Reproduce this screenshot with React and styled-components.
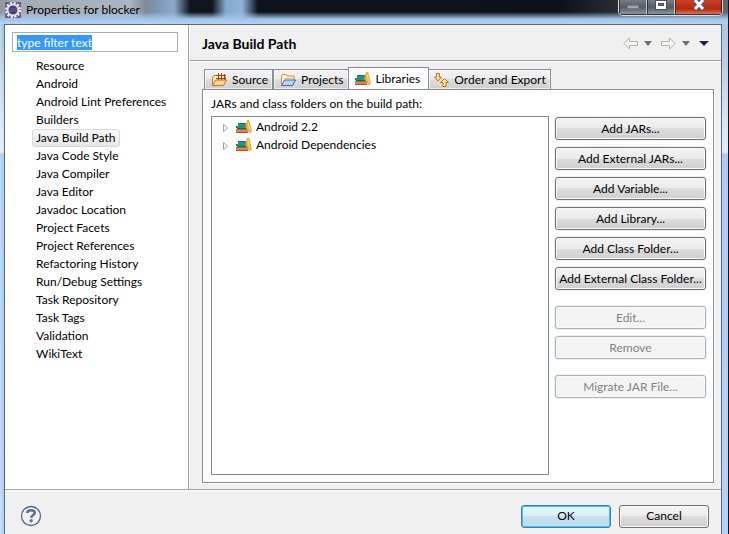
import React, { useEffect, useRef, useState } from 'react';
import styled, { createGlobalStyle, css } from 'styled-components';

const GlobalStyle = createGlobalStyle`
  *, *::before, *::after { box-sizing: border-box; }
  html, body { margin: 0; height: 100%; }
  #root { min-height: 100%; }
  body, button, input {
    font-family: Lato, "Open Sans", sans-serif;
    font-size: 12px;
    line-height: 16px;
    color: #000;
  }
`;

const Window = styled.div`
  display: flex;
  flex-direction: column;
  min-height: 100vh;
  padding: 0 2px 0 4px;
  overflow: hidden;
  border-right: 1px solid #10151c;
  background:
    linear-gradient(to right, rgba(255, 255, 255, 0.35), transparent 2px),
    linear-gradient(#9fc2e6 0, #b9cfe6 60px, #d5e4f4 120px, #dfecfa 152px, #a9cdf5 154px, #b2d4f8 100%);
`;

const TitleBar = styled.header`
  display: flex;
  flex: none;
  align-items: flex-start;
  height: 24px;
  margin: 0 -2px 0 -4px;
  padding-left: 5px;
  background:
    linear-gradient(rgba(160, 195, 232, 0) 12px, #a2c4eb 19px, #b5d2f2 24px),
    linear-gradient(to right, #8e969d 0, #a4adb5 20px, #a9b5c0 130px, #7e8a96 146px, #7d98b3 158px, #8aabcc 174px,
      #10161e 190px, #0e151d 212px, #83a9cc 226px, #8fb4da 242px, #0c131b 258px, #0b1219 560px, #262a30 610px, #5e666f 100%);
`;

const TitleText = styled.h1`
  flex: 1;
  margin: 0 0 0 5px;
  padding-top: 2px;
  font-size: 12px;
  font-weight: 400;
`;

const WindowButtons = styled.div`
  display: flex;
  height: 16px;
  margin-right: 5px;
  border: 1px solid #d9dee3;
  border-top: 0;
  border-radius: 0 0 5px 5px;
  overflow: hidden;
`;

const WindowButton = styled.button`
  display: flex;
  align-items: flex-start;
  justify-content: center;
  width: ${(p) => (p.$close ? 47 : 28)}px;
  padding: 0;
  border: 1px solid #2e343a;
  border-top: 0;
  border-right-color: ${(p) => (p.$close ? '#4a1510' : '#c4c8cc')};
  background: ${(p) => (p.$close
    ? 'linear-gradient(#c9412a, #b22a12 9px, #dc7452)'
    : 'linear-gradient(#777d83, #565c63 7px, #8b929a)')};
`;

const Client = styled.div`
  display: flex;
  flex: 1;
  flex-direction: column;
  margin-right: 4px;
  border: 1px solid #5b6878;
  border-bottom: 0;
  background: #f0f0f0;
`;

const Body = styled.div`
  display: flex;
  flex: 1;
  border-bottom: 1px solid #a0a0a0;
`;

const Sidebar = styled.nav`
  display: flex;
  flex: none;
  flex-direction: column;
  width: 184px;
  padding: 7px 10px 8px 7px;
  border-right: 1px solid #a0a0a0;
  background: #fff;
`;

const FilterInput = styled.input`
  width: 100%;
  height: 20px;
  padding: 0 4px;
  border: 1px solid #abadb3;
  border-radius: 0;
  outline: none;
  background: #fff;
  &::selection { background: #3399ff; color: #fff; }
`;

const PageList = styled.ul`
  display: flex;
  flex-direction: column;
  align-items: flex-start;
  margin: 5px 0 0 20px;
  padding: 0;
  list-style: none;
`;

const PageLink = styled.a`
  display: block;
  height: 18px;
  padding: 0 3px;
  border: 1px solid transparent;
  border-radius: 3px;
  color: #000;
  text-decoration: none;
  white-space: nowrap;
  ${(p) => p.$selected && css`
    border-color: #d9d9d9;
    background: linear-gradient(#f9f9f9, #e6e6e6);
  `}
`;

const Main = styled.main`
  display: flex;
  flex: 1;
  flex-direction: column;
  min-width: 0;
  border-left: 1px solid #fff;
`;

const PageHeader = styled.div`
  display: flex;
  flex: none;
  align-items: center;
  justify-content: space-between;
  height: 36px;
  padding: 2px 12px 0;
  border-bottom: 1px solid #a0a0a0;
`;

const PageTitle = styled.h2`
  margin: 0;
  font-size: 14px;
  font-weight: 700;
`;

const HistoryBar = styled.div`
  display: flex;
  align-items: center;
  gap: 9px;
`;

const HistoryGroup = styled.div`
  display: flex;
  align-items: center;
  gap: 6px;
`;

const IconButton = styled.button`
  display: flex;
  padding: 0;
  border: 0;
  background: none;
  svg { display: block; }
`;

const Page = styled.div`
  display: flex;
  flex: 1;
  flex-direction: column;
  padding: 5px 7px 6px 12px;
  border-top: 1px solid #fff;
`;

const TabStrip = styled.div`
  display: flex;
  flex: none;
  align-items: flex-end;
  height: 23px;
  margin-bottom: -1px;
  padding-left: 2px;
`;

const Tab = styled.button`
  display: flex;
  align-items: center;
  gap: 5px;
  height: ${(p) => (p.$active ? 23 : 21)}px;
  padding: 0 ${(p) => (p.$active ? 8 : 4)}px 0 ${(p) => (p.$last ? 4 : 6)}px;
  margin-left: ${(p) => (p.$joined ? -1 : 0)}px;
  border: 1px solid #898c95;
  border-bottom-color: ${(p) => (p.$active ? '#fff' : '#898c95')};
  background: ${(p) => (p.$active ? '#fff' : 'linear-gradient(#f2f2f2, #ebebeb 50%, #dddddd 50%, #cfcfcf)')};
  box-shadow: ${(p) => (p.$active ? 'none' : 'inset 0 0 0 1px rgba(255, 255, 255, 0.6)')};
  white-space: nowrap;
  svg { flex: none; }
`;

const TabPanel = styled.section`
  display: grid;
  flex: 1;
  grid-template: auto 1fr / 1fr 151px;
  column-gap: 6px;
  padding: 6px 7px 7px 8px;
  border: 1px solid #898c95;
  background: #fff;
  box-shadow: 1px 1px 0 #fff;
`;

const PanelLabel = styled.h3`
  grid-column: 1 / -1;
  margin: 0 0 4px;
  font-size: 12px;
  font-weight: 400;
`;

const Tree = styled.ul`
  margin: 0;
  padding: 1px 0 0 10px;
  border: 1px solid #828790;
  background: #fff;
  list-style: none;
`;

const TreeRow = styled.li`
  display: flex;
  align-items: center;
  gap: 4px;
  height: 18px;
`;

const Expander = styled(IconButton)`
  width: 10px;
  padding-top: 2px;
`;

const ActionColumn = styled.div`
  display: flex;
  flex-direction: column;
  gap: 16px;
  padding-top: 1px;
`;

const ActionGroup = styled.div`
  display: flex;
  flex-direction: column;
  gap: 7px;
`;

const PushButton = styled.button`
  display: flex;
  align-items: center;
  justify-content: center;
  height: 23px;
  padding: 0;
  border: 1px solid #707070;
  border-radius: 3px;
  background: linear-gradient(#f3f3f3, #ebebeb 50%, #dddddd 50%, #cfcfcf);
  box-shadow: inset 0 0 0 1px #fafafa, 0 0 0 1px #f0f0f0;
  line-height: 20px;
  white-space: nowrap;
  ${(p) => p.$default && css`
    border-color: #3c7fb1;
    background: linear-gradient(#eaf5fb, #dceef8 50%, #c6e2f1 50%, #b9dbec);
    box-shadow: inset 0 0 0 1px #33c9f7;
  `}
  &:disabled {
    border-color: #adb2b5;
    background: #f4f4f4;
    color: #838383;
  }
`;

const Footer = styled.footer`
  display: flex;
  flex: none;
  align-items: center;
  justify-content: space-between;
  height: 44px;
  padding: 7px 12px 0 15px;
  border-top: 1px solid #fff;
`;

const DialogButtons = styled.div`
  display: grid;
  grid-template-columns: 90px 90px;
  gap: 8px;
`;

const EclipseIcon = () => (
  <svg width="16" height="18" viewBox="0 0 16 18" aria-hidden="true">
    <rect y="2" width="16" height="16" fill="#6a5a90" />
    <circle cx="8" cy="10" r="7" fill="none" stroke="#f3f3f3" strokeWidth="2" strokeDasharray="2.2 1.5" />
    <circle cx="8" cy="10" r="5.4" fill="#4b3b70" stroke="#e4e4ea" strokeWidth="1.8" />
    <path d="M4 9h8M4 11h8" stroke="#6d5d94" />
  </svg>
);

const LibraryIcon = () => (
  <svg width="16" height="16" viewBox="0 0 16 16" aria-hidden="true">
    <path d="M2 4h8v3H2z" fill="#1f8fae" />
    <path d="M2 4.500h7" stroke="#166a94" />
    <path d="M1 7h10v3H1z" fill="#1c9a78" />
    <path d="M.5 7v2M1 9.500h9" stroke="#0f6b58" fill="none" />
    <path d="M0 10h12v4H0z" fill="#e08350" />
    <path d="M0 13.500h12" stroke="#b5522c" />
    <path d="M0 10.500h10" stroke="#c2623a" />
    <path d="M10.500 3.500l1-2h1.500l2.500 11-1 1h-1.500l-1.500-5.500-2 1z" fill="#f6b52c" stroke="#d9951c" strokeWidth=".6" />
    <path d="M12 3l2 9" stroke="#ffdc7c" fill="none" />
  </svg>
);

const SourceIcon = () => (
  <svg width="16" height="16" viewBox="0 0 16 16" aria-hidden="true">
    <path d="M1.500 13V5.500l1.500-2h3l1 1.500h7.500V8" fill="#fff0b8" stroke="#b97a24" />
    <rect x="6" y="2" width="8" height="6" fill="#f6d9a8" />
    <path d="M5 3.500h10M5 6.500h10M7.500 1v7M10.500 1v7M13.500 2v6" stroke="#855124" fill="none" />
    <path d="M1.500 13.500l3-5.500h11l-3 5.500z" fill="#fdd793" stroke="#b97a24" />
  </svg>
);

const ProjectsIcon = () => (
  <svg width="16" height="16" viewBox="0 0 16 16" aria-hidden="true">
    <path d="M1.500 12.500V4.500l1-2h3.500l1 1.500h7V8" fill="#fff4c6" stroke="#c49237" />
    <path d="M4 6.500h9" stroke="#e0c078" />
    <path d="M1.500 13.500L4.500 8h11l-3 5.500z" fill="#b9d3fa" stroke="#3e66b4" />
  </svg>
);

const OrderIcon = () => (
  <svg width="16" height="16" viewBox="0 0 16 16" aria-hidden="true">
    <path d="M3.500 1.500h3v3.500h2L5 9 1.500 5h2z" fill="#ffe395" stroke="#b9780f" />
    <path d="M10 14.500h3v-4h2.500l-4-4-4 4H10z" fill="#ffe395" stroke="#b9780f" />
  </svg>
);

const HistoryArrow = ({ forward }) => (
  <svg width="15" height="13" viewBox="0 0 15 13" aria-hidden="true">
    <path
      d={forward ? 'M.5 4.500h8v-3.500l5.500 5.500-5.500 5.500v-3.500h-8z' : 'M14.500 4.500h-8V1L1 6.500 6.500 12V8.500h8z'}
      fill="#f6f5ef"
      stroke="#b3b2a9"
    />
  </svg>
);

const MenuArrow = ({ color = '#707070', width = 8 }) => (
  <svg width={width} height="5" viewBox="0 0 8 5" preserveAspectRatio="none" aria-hidden="true">
    <path d="M0 0h8L4 5z" fill={color} />
  </svg>
);

const ExpandArrow = () => (
  <svg width="7" height="10" viewBox="0 0 7 10" aria-hidden="true">
    <path d="M1.500 1.500v7L5.500 5z" fill="#fff" stroke="#a0a0a0" />
  </svg>
);

const HelpIcon = () => (
  <svg width="22" height="22" viewBox="0 0 22 22" aria-hidden="true">
    <circle cx="11" cy="11" r="9.500" fill="#f2f3f5" stroke="#52668a" strokeWidth="1.300" />
    <path d="M7.300 8c.3-3.700 7.400-3.500 7.400-.3 0 2.600-3.500 2.400-3.500 5" fill="none" stroke="#5b6f93" strokeWidth="2.600" />
    <circle cx="11.200" cy="15.800" r="1.700" fill="#5b6f93" />
  </svg>
);

const MinimizeGlyph = () => (
  <svg width="12" height="12" viewBox="0 0 12 12" aria-hidden="true">
    <rect x=".5" y="5.500" width="11" height="3" fill="#a5a7aa" stroke="#777c82" />
  </svg>
);

const MaximizeGlyph = () => (
  <svg width="12" height="12" viewBox="0 0 12 12" aria-hidden="true">
    <rect x=".5" y=".5" width="11" height="9" fill="#fff" stroke="#4a4e66" />
    <rect x="3.500" y="3.500" width="5" height="2" fill="#666c78" stroke="#4a4e66" />
  </svg>
);

const CloseGlyph = () => (
  <svg width="14" height="12" viewBox="0 0 14 12" aria-hidden="true">
    <path d="M3 0l8 9M11 0L3 9" stroke="#52536a" strokeWidth="5" />
    <path d="M3 0l8 9M11 0L3 9" stroke="#fff" strokeWidth="3" />
  </svg>
);

const pages = [
  'Resource', 'Android', 'Android Lint Preferences', 'Builders', 'Java Build Path',
  'Java Code Style', 'Java Compiler', 'Java Editor', 'Javadoc Location', 'Project Facets',
  'Project References', 'Refactoring History', 'Run/Debug Settings', 'Task Repository',
  'Task Tags', 'Validation', 'WikiText',
];

const tabs = [
  { label: 'Source', Icon: SourceIcon },
  { label: 'Projects', Icon: ProjectsIcon },
  { label: 'Libraries', Icon: LibraryIcon },
  { label: 'Order and Export', Icon: OrderIcon },
];

const libraries = ['Android 2.2', 'Android Dependencies'];

const actionGroups = [
  {
    actions: ['Add JARs...', 'Add External JARs...', 'Add Variable...', 'Add Library...',
      'Add Class Folder...', 'Add External Class Folder...'],
  },
  { actions: ['Edit...', 'Remove'], disabled: true },
  { actions: ['Migrate JAR File...'], disabled: true },
];

export default function App() {
  const filterRef = useRef(null);
  const [filter, setFilter] = useState('type filter text');

  useEffect(() => {
    filterRef.current.focus();
    filterRef.current.select();
  }, []);

  return (
    <>
      <GlobalStyle />
      <Window>
        <TitleBar>
          <EclipseIcon />
          <TitleText>Properties for blocker</TitleText>
          <WindowButtons>
            <WindowButton aria-label="Minimize"><MinimizeGlyph /></WindowButton>
            <WindowButton aria-label="Maximize"><MaximizeGlyph /></WindowButton>
            <WindowButton $close aria-label="Close"><CloseGlyph /></WindowButton>
          </WindowButtons>
        </TitleBar>
        <Client>
          <Body>
            <Sidebar aria-label="Property pages">
              <FilterInput
                ref={filterRef}
                aria-label="Filter pages"
                value={filter}
                onChange={(e) => setFilter(e.target.value)}
              />
              <PageList>
                {pages.map((name) => (
                  <li key={name}>
                    <PageLink href="#" $selected={name === 'Java Build Path'}>{name}</PageLink>
                  </li>
                ))}
              </PageList>
            </Sidebar>
            <Main>
              <PageHeader>
                <PageTitle>Java Build Path</PageTitle>
                <HistoryBar>
                  <HistoryGroup>
                    <IconButton aria-label="Back"><HistoryArrow /></IconButton>
                    <IconButton aria-label="Back history"><MenuArrow /></IconButton>
                  </HistoryGroup>
                  <HistoryGroup>
                    <IconButton aria-label="Forward"><HistoryArrow forward /></IconButton>
                    <IconButton aria-label="Forward history"><MenuArrow /></IconButton>
                  </HistoryGroup>
                  <IconButton aria-label="Menu"><MenuArrow color="#26215c" width={10} /></IconButton>
                </HistoryBar>
              </PageHeader>
              <Page>
                <TabStrip role="tablist">
                  {tabs.map(({ label, Icon }, i) => (
                    <Tab
                      key={label}
                      role="tab"
                      aria-selected={i === 2}
                      $active={i === 2}
                      $joined={i > 1}
                      $last={i === tabs.length - 1}
                    >
                      <Icon />
                      {label}
                    </Tab>
                  ))}
                </TabStrip>
                <TabPanel role="tabpanel">
                  <PanelLabel>JARs and class folders on the build path:</PanelLabel>
                  <Tree>
                    {libraries.map((name) => (
                      <TreeRow key={name}>
                        <Expander aria-label={`Expand ${name}`}><ExpandArrow /></Expander>
                        <LibraryIcon />
                        {name}
                      </TreeRow>
                    ))}
                  </Tree>
                  <ActionColumn>
                    {actionGroups.map(({ actions, disabled }) => (
                      <ActionGroup key={actions[0]}>
                        {actions.map((label) => (
                          <PushButton key={label} disabled={disabled}>{label}</PushButton>
                        ))}
                      </ActionGroup>
                    ))}
                  </ActionColumn>
                </TabPanel>
              </Page>
            </Main>
          </Body>
          <Footer>
            <IconButton aria-label="Help"><HelpIcon /></IconButton>
            <DialogButtons>
              <PushButton $default>OK</PushButton>
              <PushButton>Cancel</PushButton>
            </DialogButtons>
          </Footer>
        </Client>
      </Window>
    </>
  );
}
